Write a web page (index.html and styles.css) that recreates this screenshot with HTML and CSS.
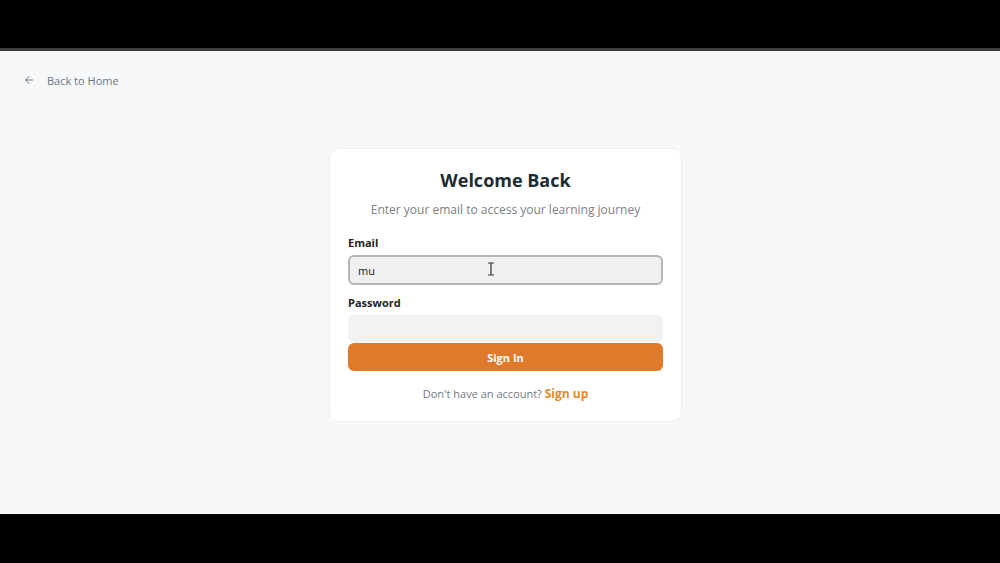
FILE: index.html
```html
<!DOCTYPE html>
<html>
<head>
    <title>Sign In</title>
    <link rel="stylesheet" href="styles.css">
</head>

<body>
    <div class="screen">
        <header class="topbar">
            <a class="back-link" href="#">
                <svg class="back-icon" viewBox="0 0 24 24" width="12" height="12">
                    <path d="M19 12H5"/>
                    <path d="m12 19-7-7 7-7"/>
                </svg>
                <span>Back to Home</span>
            </a>
        </header>

        <main class="wrap">
            <section class="card">
                <h1>Welcome Back</h1>
                <p class="subtitle">Enter your email to access your learning journey</p>

                <form class="login-form">
                    <label for="email">Email</label>
                    <div class="field">
                        <input type="text" id="email" class="input input-active" value="mu">
                        <!-- mouse pointer hovering the field -->
                        <svg class="ibeam" viewBox="0 0 8 14" width="8" height="14">
                            <path d="M1 1h6M4 1v12M1 13h6"/>
                        </svg>
                    </div>

                    <label for="password">Password</label>
                    <input type="password" id="password" class="input">

                    <button type="button" class="btn-primary">Sign In</button>
                </form>

                <p class="signup">Don't have an account? <a href="#">Sign up</a></p>
            </section>
        </main>
    </div>
</body>
</html>
```

FILE: styles.css
```css
body {
    margin: 0;
    padding: 0;
    background-color: #000;
    font-family: "Open Sans", "Noto Sans", sans-serif;
}

.screen {
    margin-top: 48px;
    height: 466px;
    box-sizing: border-box;
    border-top: 3px solid #3c3c3c;
    background-color: #f6f8f9;
}

.topbar {
    padding: 20px 23px 0;
}

.back-link {
    display: flex;
    align-items: center;
    gap: 12px;
    height: 18px;
    color: #6b7684;
    font-size: 11px;
    text-decoration: none;
}

.back-icon {
    fill: none;
    stroke: #6b7684;
    stroke-width: 2;
    stroke-linecap: round;
    stroke-linejoin: round;
}

.wrap {
    display: flex;
    justify-content: center;
    padding-top: 59px;
    padding-left: 11px;
}

.card {
    width: 353px;
    box-sizing: border-box;
    padding: 18px 18px 18px;
    background-color: #fff;
    border: 1px solid #eceef0;
    border-radius: 10px;
    text-align: center;
}

.card h1 {
    margin: 0;
    font-size: 18px;
    line-height: 26px;
    font-weight: 700;
    color: #1b2c32;
}

.subtitle {
    margin: 8px 0 0;
    font-size: 12px;
    line-height: 18px;
    color: #7b8086;
}

.login-form {
    display: flex;
    flex-direction: column;
    margin-top: 16px;
    text-align: left;
}

.login-form label {
    font-size: 11px;
    line-height: 16px;
    font-weight: 700;
    color: #222;
    margin-bottom: 4px;
}

.field {
    position: relative;
    margin-bottom: 10px;
}

.input {
    display: block;
    width: 100%;
    height: 27px;
    box-sizing: border-box;
    padding: 0 10px;
    border: none;
    border-radius: 6px;
    background-color: #f1f2f3;
    font-family: inherit;
    font-size: 11px;
    color: #222;
    outline: none;
}

.input-active {
    height: 30px;
    border: 2px solid #b5b5b5;
    padding: 0 8px;
    background-color: #f0f0f0;
}

.ibeam {
    position: absolute;
    left: 139px;
    top: 7px;
    fill: none;
    stroke: #333;
    stroke-width: 1.2;
}

.btn-primary {
    margin-top: 1px;
    height: 28px;
    border: none;
    border-radius: 6px;
    background-color: #df7a2a;
    color: #fff;
    font-family: inherit;
    font-size: 11px;
    font-weight: 700;
    cursor: pointer;
}

.signup {
    margin: 14px 0 0;
    font-size: 11px;
    line-height: 18px;
    color: #737a82;
}

.signup a {
    color: #e08a2c;
    font-weight: 700;
    font-size: 12px;
    text-decoration: none;
}
```
